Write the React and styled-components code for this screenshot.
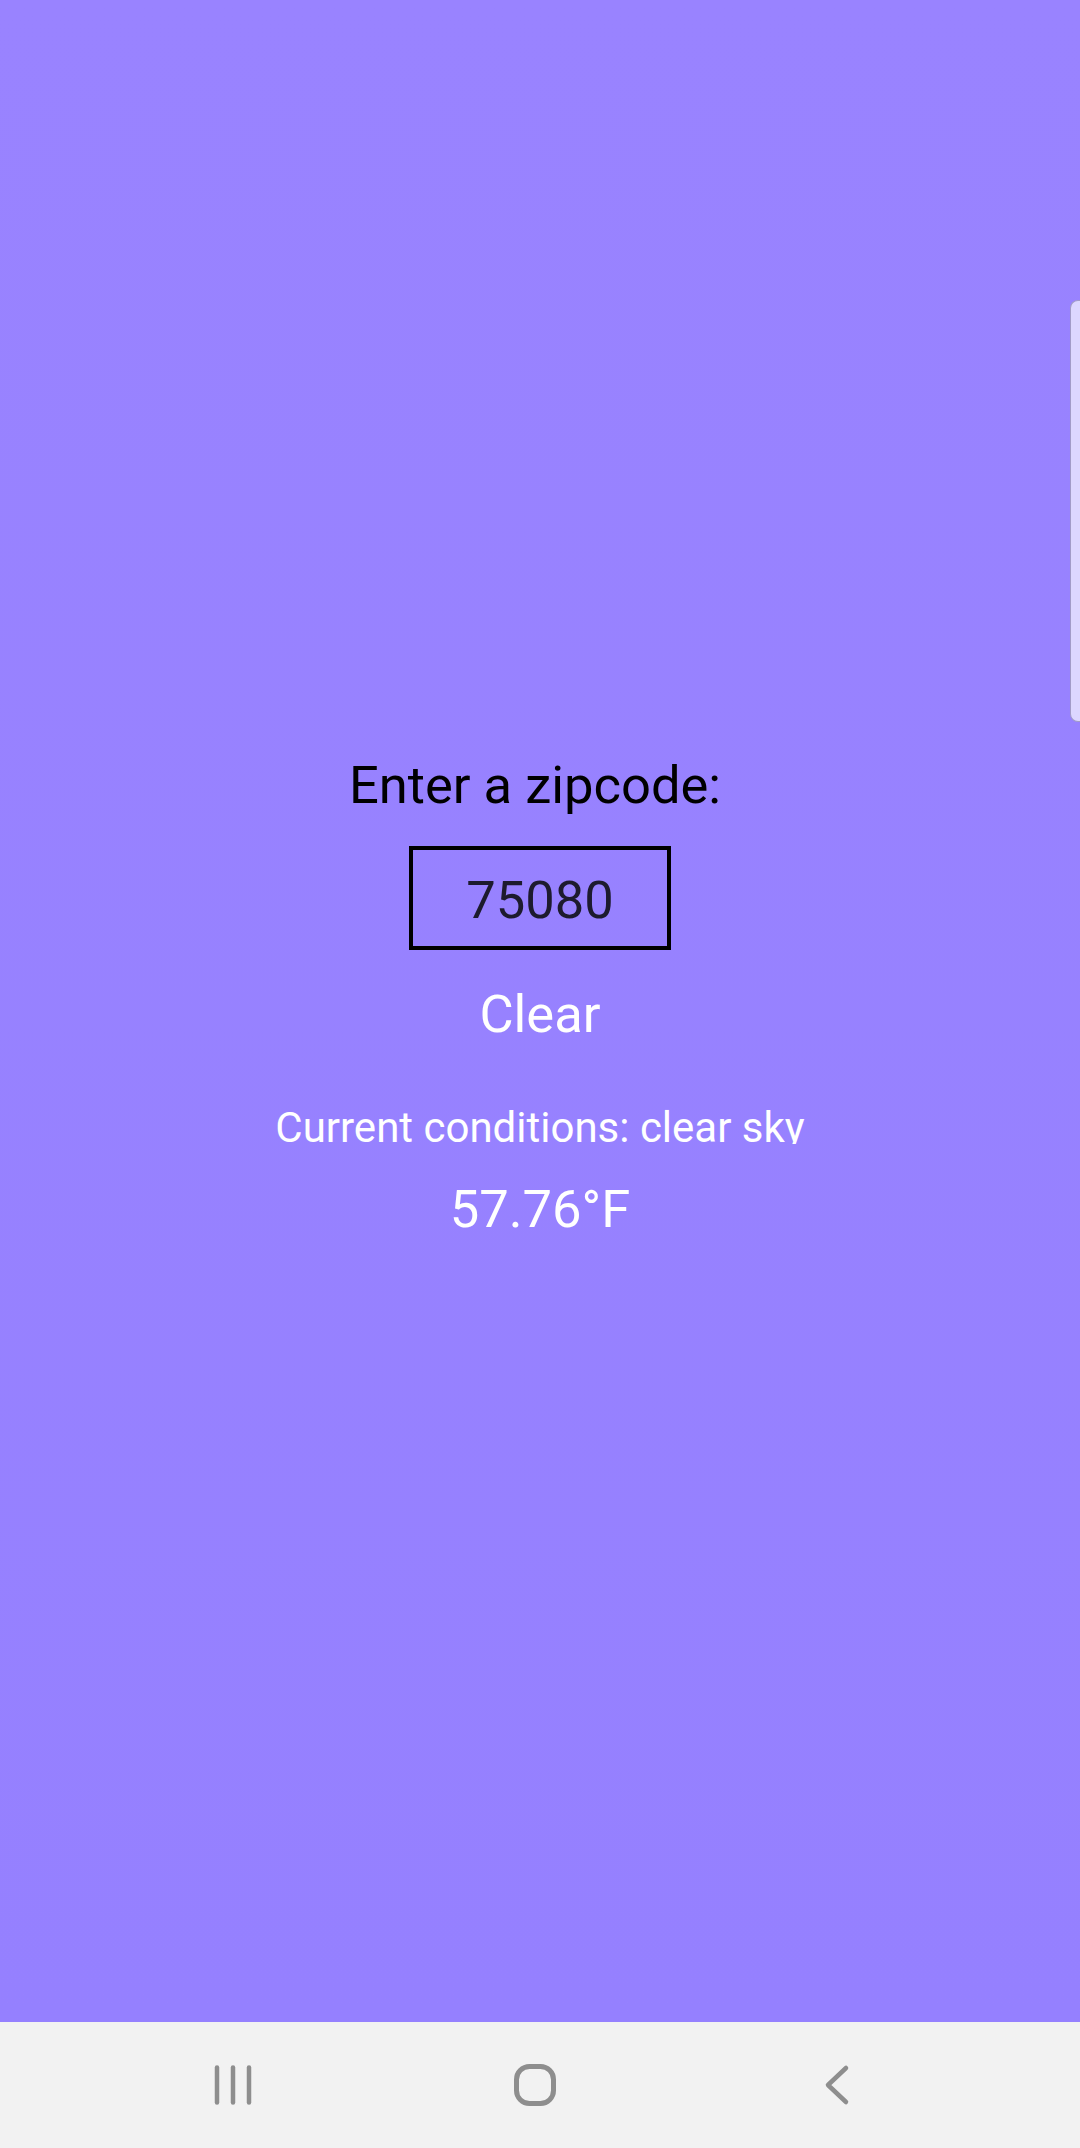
import React, { useState } from 'react';
import styled, { createGlobalStyle } from 'styled-components';

/* ---------- Styles ---------- */
const GlobalStyle = createGlobalStyle`
	html, body {
		margin: 0;
		padding: 0;
		background: #9781ff;
	}
	* {
		box-sizing: border-box;
	}
`;

const Screen = styled.div`
	position: relative;
	width: 1080px;
	height: 2148px;
	display: flex;
	flex-direction: column;
	overflow: hidden;
	font-family: Roboto, 'Noto Sans', sans-serif;
`;

const Main = styled.main`
	flex: 1;
	display: flex;
	flex-direction: column;
	align-items: center;
	padding-top: 754px;
	background: linear-gradient(180deg, #9983ff 0%, #9580ff 100%);
`;

const Label = styled.div`
	margin-right: 10px;
	font-size: 52.5px;
	line-height: 62px;
	height: 62px;
	color: #000;
`;

const ZipInput = styled.input`
	margin-top: 30px;
	width: 262px;
	height: 104px;
	border: 4px solid #000;
	background: transparent;
	padding: 4px 0 0;
	font-family: inherit;
	font-size: 52.5px;
	line-height: 92px;
	text-align: center;
	color: #1d1b2e;
	outline: none;
`;

const ClearButton = styled.button`
	margin-top: 34px;
	border: 0;
	padding: 0;
	background: none;
	font-family: inherit;
	font-size: 52.5px;
	line-height: 60px;
	height: 60px;
	color: #fff;
	cursor: pointer;
`;

const Text = styled.div`
	margin-top: ${p => p.gap}px;
	font-size: ${p => p.size}px;
	line-height: ${p => p.lh}px;
	height: ${p => p.h}px;
	overflow: hidden;
	color: #fff;
	white-space: nowrap;
`;

const EdgeHandle = styled.div`
	position: absolute;
	right: 0;
	top: 300px;
	width: 10px;
	height: 422px;
	background: #dcd7ff;
	border: 1px solid #a29cc8;
	border-right: 0;
	border-radius: 8px 0 0 8px;
`;

const NavBar = styled.nav`
	height: 126px;
	background: #f2f2f2;
	display: flex;
	justify-content: center;
	align-items: center;
	gap: 260px;
	padding-right: 10px;
`;

const NavButton = styled.div`
	width: 42px;
	height: 42px;
	display: flex;
	align-items: center;
	justify-content: center;
	color: #8e8e8e;
`;

/* ---------- Icons ---------- */
const RecentsIcon = () => (
	<svg width="42" height="42" viewBox="0 0 42 42">
		<g stroke="currentColor" strokeWidth="4.5" strokeLinecap="round">
			<line x1="5" y1="3.5" x2="5" y2="38.5" />
			<line x1="21" y1="3.5" x2="21" y2="38.5" />
			<line x1="37" y1="3.5" x2="37" y2="38.5" />
		</g>
	</svg>
);

const HomeIcon = () => (
	<svg width="42" height="42" viewBox="0 0 42 42">
		<rect x="2.5" y="2.5" width="37" height="37" rx="13" fill="none" stroke="currentColor" strokeWidth="5" />
	</svg>
);

const BackIcon = () => (
	<svg width="42" height="42" viewBox="0 0 42 42">
		<polyline points="30,4 12,21 30,38" fill="none" stroke="currentColor" strokeWidth="4.5" strokeLinecap="round" strokeLinejoin="round" />
	</svg>
);

/* ---------- Component ---------- */
const App = () => {
	const [zip, setZip] = useState('75080');

	return (
		<Screen>
			<GlobalStyle />
			<Main>
				<Label>Enter a zipcode:</Label>
				<ZipInput value={zip} onChange={e => setZip(e.target.value)} />
				<ClearButton onClick={() => setZip('')}>Clear</ClearButton>
				<Text gap={60} size={42} lh={48} h={40}>Current conditions: clear sky</Text>
				<Text gap={35} size={52.5} lh={60} h={60}>57.76°F</Text>
			</Main>
			<EdgeHandle />
			<NavBar>
				<NavButton><RecentsIcon /></NavButton>
				<NavButton><HomeIcon /></NavButton>
				<NavButton><BackIcon /></NavButton>
			</NavBar>
		</Screen>
	);
};

export default App;
